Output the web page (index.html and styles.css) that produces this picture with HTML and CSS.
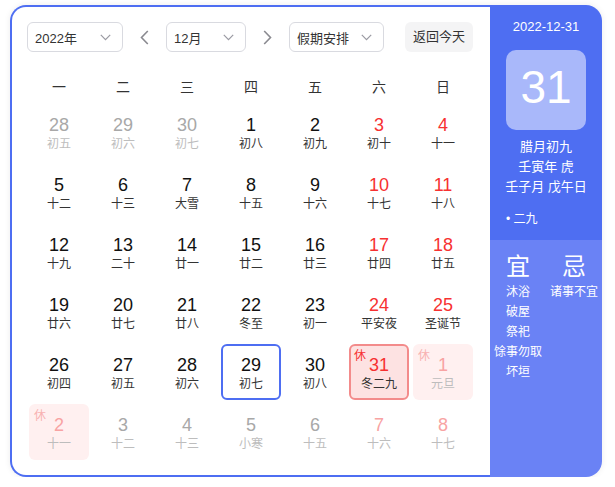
FILE: index.html
```html
<!DOCTYPE html>
<html lang="zh-CN">
<head>
<meta charset="utf-8">
<title>万年历</title>
<link rel="stylesheet" href="styles.css">
</head>
<body>
<div class="calendar">
  <div class="main">
    <div class="toolbar">
      <div class="select year"><span>2022年</span><svg class="chev" width="11" height="7" viewBox="0 0 11 7"><path d="M0.8 0.8 L5.5 5.6 L10.2 0.8" fill="none" stroke="#9a9aa2" stroke-width="1.2"/></svg></div>
      <div class="arrow"><svg width="9" height="15" viewBox="0 0 9 15"><path d="M7.8 1 L1.5 7.5 L7.8 14" fill="none" stroke="#8a8a90" stroke-width="1.6"/></svg></div>
      <div class="select month"><span>12月</span><svg class="chev" width="11" height="7" viewBox="0 0 11 7"><path d="M0.8 0.8 L5.5 5.6 L10.2 0.8" fill="none" stroke="#9a9aa2" stroke-width="1.2"/></svg></div>
      <div class="arrow"><svg width="9" height="15" viewBox="0 0 9 15"><path d="M1.2 1 L7.5 7.5 L1.2 14" fill="none" stroke="#8a8a90" stroke-width="1.6"/></svg></div>
      <div class="select holiday-sel"><span>假期安排</span><svg class="chev" width="11" height="7" viewBox="0 0 11 7"><path d="M0.8 0.8 L5.5 5.6 L10.2 0.8" fill="none" stroke="#9a9aa2" stroke-width="1.2"/></svg></div>
      <div class="today-btn">返回今天</div>
    </div>
    <div class="weekdays">
      <span>一</span><span>二</span><span>三</span><span>四</span><span>五</span><span>六</span><span>日</span>
    </div>
    <div class="grid">
      <div class="day other"><b>28</b><i>初五</i></div>
      <div class="day other"><b>29</b><i>初六</i></div>
      <div class="day other"><b>30</b><i>初七</i></div>
      <div class="day"><b>1</b><i>初八</i></div>
      <div class="day"><b>2</b><i>初九</i></div>
      <div class="day weekend"><b>3</b><i>初十</i></div>
      <div class="day weekend"><b>4</b><i>十一</i></div>

      <div class="day"><b>5</b><i>十二</i></div>
      <div class="day"><b>6</b><i>十三</i></div>
      <div class="day"><b>7</b><i>大雪</i></div>
      <div class="day"><b>8</b><i>十五</i></div>
      <div class="day"><b>9</b><i>十六</i></div>
      <div class="day weekend"><b>10</b><i>十七</i></div>
      <div class="day weekend"><b>11</b><i>十八</i></div>

      <div class="day"><b>12</b><i>十九</i></div>
      <div class="day"><b>13</b><i>二十</i></div>
      <div class="day"><b>14</b><i>廿一</i></div>
      <div class="day"><b>15</b><i>廿二</i></div>
      <div class="day"><b>16</b><i>廿三</i></div>
      <div class="day weekend"><b>17</b><i>廿四</i></div>
      <div class="day weekend"><b>18</b><i>廿五</i></div>

      <div class="day"><b>19</b><i>廿六</i></div>
      <div class="day"><b>20</b><i>廿七</i></div>
      <div class="day"><b>21</b><i>廿八</i></div>
      <div class="day"><b>22</b><i>冬至</i></div>
      <div class="day"><b>23</b><i>初一</i></div>
      <div class="day weekend"><b>24</b><i>平安夜</i></div>
      <div class="day weekend"><b>25</b><i>圣诞节</i></div>

      <div class="day"><b>26</b><i>初四</i></div>
      <div class="day"><b>27</b><i>初五</i></div>
      <div class="day"><b>28</b><i>初六</i></div>
      <div class="day today"><b>29</b><i>初七</i></div>
      <div class="day"><b>30</b><i>初八</i></div>
      <div class="day weekend selected"><em class="rest">休</em><b>31</b><i>冬二九</i></div>
      <div class="day other weekend holiday"><em class="rest">休</em><b>1</b><i>元旦</i></div>

      <div class="day other weekend holiday"><em class="rest">休</em><b>2</b><i>十一</i></div>
      <div class="day other"><b>3</b><i>十二</i></div>
      <div class="day other"><b>4</b><i>十三</i></div>
      <div class="day other"><b>5</b><i>小寒</i></div>
      <div class="day other"><b>6</b><i>十五</i></div>
      <div class="day other weekend"><b>7</b><i>十六</i></div>
      <div class="day other weekend"><b>8</b><i>十七</i></div>
    </div>
  </div>
  <div class="panel">
    <div class="panel-top">
      <div class="p-date">2022-12-31</div>
      <div class="p-big">31</div>
      <div class="p-lunar">
        <div>腊月初九</div>
        <div>壬寅年 虎</div>
        <div>壬子月 戊午日</div>
      </div>
      <div class="p-term">• 二九</div>
    </div>
    <div class="panel-bottom">
      <div class="col">
        <div class="col-title">宜</div>
        <div>沐浴</div>
        <div>破屋</div>
        <div>祭祀</div>
        <div>馀事勿取</div>
        <div>坏垣</div>
      </div>
      <div class="col">
        <div class="col-title">忌</div>
        <div>诸事不宜</div>
      </div>
    </div>
  </div>
</div>
</body>
</html>
```

FILE: styles.css
```css
* { box-sizing: border-box; }
html, body { margin: 0; padding: 0; background: #fff; }
body {
  font-family: "Liberation Sans", "Noto Sans CJK SC", sans-serif;
  color: #333;
}
.calendar {
  display: flex;
  width: 592px;
  height: 472px;
  margin: 5px 0 0 10px;
  border-radius: 16px;
  box-shadow: 0 0 6px rgba(0, 0, 0, 0.08);
}
.main {
  width: 480px;
  height: 472px;
  border: 2px solid #4e6ef2;
  border-right: none;
  border-radius: 16px 0 0 16px;
  padding: 15px 15px 0 15px;
  background: #fff;
}
.toolbar {
  display: flex;
  align-items: center;
  height: 30px;
}
.select {
  height: 30px;
  border: 1px solid #d9dae0;
  border-radius: 6px;
  display: flex;
  align-items: center;
  justify-content: space-between;
  padding: 0 11px 0 7px;
  font-size: 13px;
  color: #333;
}
.select .chev { display: block; }
.year { width: 96px; }
.month { width: 80px; }
.holiday-sel { width: 95px; }
.arrow {
  width: 43px;
  height: 30px;
  display: flex;
  align-items: center;
  justify-content: center;
}
.arrow svg { display: block; }
.today-btn {
  margin-left: 21px;
  width: 68px;
  height: 30px;
  border-radius: 6px;
  background: #f4f4f5;
  font-size: 13px;
  line-height: 30px;
  text-align: center;
  color: #333;
}
.weekdays {
  margin-top: 16px;
  height: 36px;
  padding: 0 2px;
  display: grid;
  grid-template-columns: repeat(7, 60px);
  column-gap: 4px;
  align-items: center;
  font-size: 14px;
  color: #333;
  text-align: center;
}
.grid {
  padding: 0 2px;
  display: grid;
  grid-template-columns: repeat(7, 60px);
  grid-auto-rows: 56px;
  gap: 4px;
}
.day {
  position: relative;
  border-radius: 6px;
  border: 2px solid transparent;
  display: flex;
  flex-direction: column;
  align-items: center;
  padding-top: 8px;
}
.day b {
  font-weight: normal;
  font-size: 18px;
  line-height: 22px;
  color: #111;
}
.day i {
  font-style: normal;
  font-size: 12px;
  line-height: 16px;
  color: #333;
}
.day.weekend b { color: #f73131; }
.day.other b { color: #a8a8a8; }
.day.other i { color: #bdbdbd; }
.day.other.weekend b { color: #f8a3a3; }
.day.today { border-color: #4e6ef2; }
.day.selected {
  background: #fde2e2;
  border-color: #f38b8b;
}
.day.holiday { background: #fff0f0; }
.rest {
  position: absolute;
  left: 3px;
  top: 3px;
  font-style: normal;
  font-size: 12px;
  line-height: 14px;
  color: #f73131;
}
.holiday .rest { color: #f8b2b2; }
.panel {
  width: 112px;
  height: 472px;
  display: flex;
  flex-direction: column;
  color: #fff;
}
.panel-top {
  height: 235px;
  background: #4e6ef2;
  border-top-right-radius: 16px;
  padding-top: 13px;
  text-align: center;
}
.p-date {
  font-size: 13px;
  line-height: 18px;
}
.p-big {
  width: 80px;
  height: 80px;
  margin: 14px auto 0;
  border-radius: 10px;
  background: #a9b8fa;
  font-size: 46px;
  line-height: 74px;
  text-align: center;
}
.p-lunar {
  margin-top: 7px;
  font-size: 13px;
  line-height: 20px;
}
.p-term {
  margin-top: 12px;
  padding-left: 16px;
  text-align: left;
  font-size: 12px;
  line-height: 20px;
}
.panel-bottom {
  flex: 1;
  background: #6a82f5;
  border-bottom-right-radius: 16px;
  display: flex;
  padding-top: 12px;
}
.col {
  width: 56px;
  text-align: center;
  font-size: 12px;
  line-height: 20px;
  white-space: nowrap;
}
.col-title {
  font-size: 24px;
  line-height: 30px;
}
```
